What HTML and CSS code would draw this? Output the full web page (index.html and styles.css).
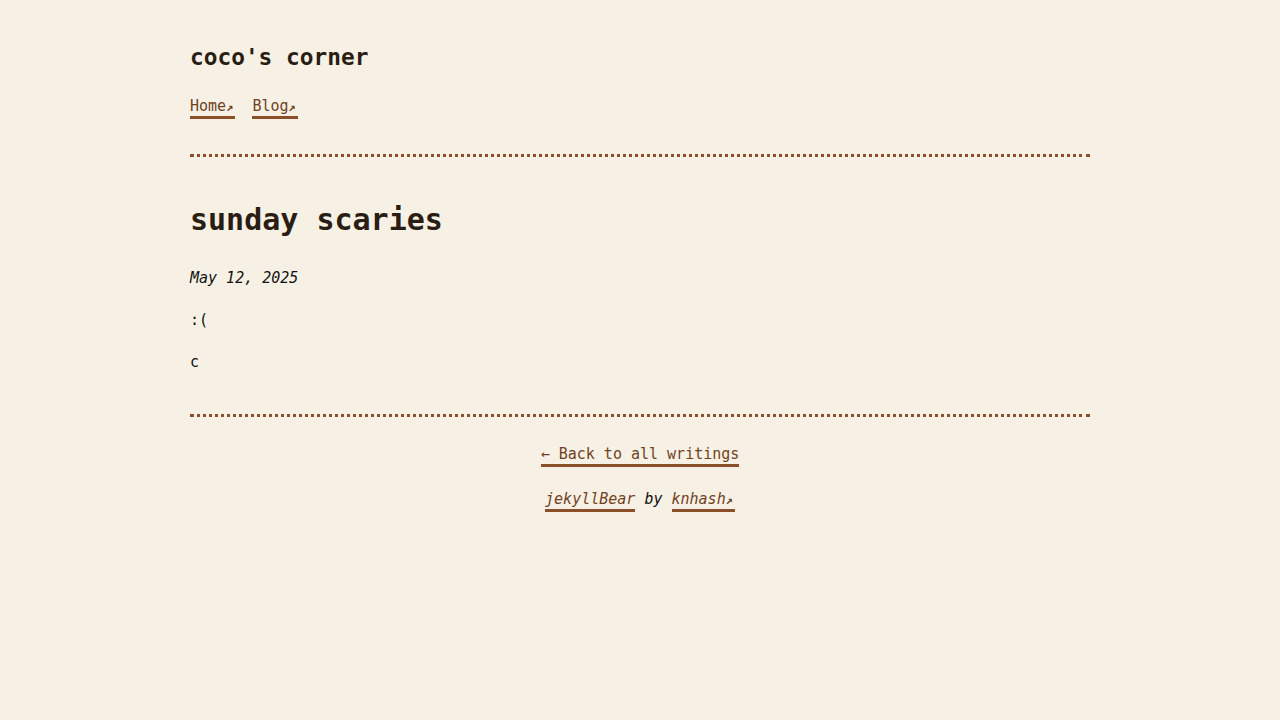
FILE: index.html
```html
<!DOCTYPE html>
<html lang="en">
<head>
<meta charset="utf-8">
<title>sunday scaries | coco's corner</title>
<link rel="stylesheet" href="styles.css">
</head>
<body>
<div class="page">
  <header class="site-header">
    <h1 class="site-title">coco's corner</h1>
    <nav class="site-nav">
      <a class="link ext nav-link" href="#">Home</a>
      <a class="link ext nav-link" href="#">Blog</a>
    </nav>
  </header>
  <main class="post">
    <h2 class="post-title">sunday scaries</h2>
    <p class="post-date">May 12, 2025</p>
    <p class="post-text">:(</p>
    <p class="post-text">c</p>
  </main>
  <footer class="site-footer">
    <p class="back"><a class="link" href="#">← Back to all writings</a></p>
    <p class="credit"><a class="link" href="#">jekyllBear</a> by <a class="link ext" href="#">knhash</a></p>
  </footer>
</div>
</body>
</html>
```
FILE: styles.css
```css
html, body {
  margin: 0;
  padding: 0;
}
body {
  background: #f7f1e5;
  color: #111;
  font-family: "DejaVu Sans Mono", "Liberation Mono", monospace;
  font-size: 15px;
  line-height: 1.8;
}
.page {
  max-width: 900px;
  margin: 0 auto;
  padding-top: 37px;
}
.site-title {
  margin: 0;
  font-size: 22.8px;
  line-height: 40.5px;
  color: #2a1e14;
  font-weight: bold;
}
.site-nav {
  margin-top: 15px;
  padding-bottom: 34px;
  border-bottom: 3px dotted #8b4f2a;
}
.nav-link {
  margin-right: 8px;
}
.link {
  color: #70421e;
  text-decoration: none;
  padding-bottom: 1px;
  border-bottom: 3px solid #8b4f2a;
}
.ext::after {
  content: "↗";
  font-size: 0.8em;
  font-style: normal;
  font-weight: bold;
  padding-right: 2px;
}
.post {
  padding-top: 43px;
  padding-bottom: 38px;
  border-bottom: 3px dotted #8b4f2a;
}
.post-title {
  margin: 0;
  font-size: 30px;
  line-height: 39px;
  color: #2a1e14;
  font-weight: bold;
}
.post-date {
  margin: 26px 0 0;
  font-style: italic;
}
.post-text {
  margin: 15px 0 0;
}
.site-footer {
  text-align: center;
  padding-top: 24px;
}
.back {
  margin: 0;
}
.credit {
  margin: 18px 0 0;
  font-style: italic;
}
```
